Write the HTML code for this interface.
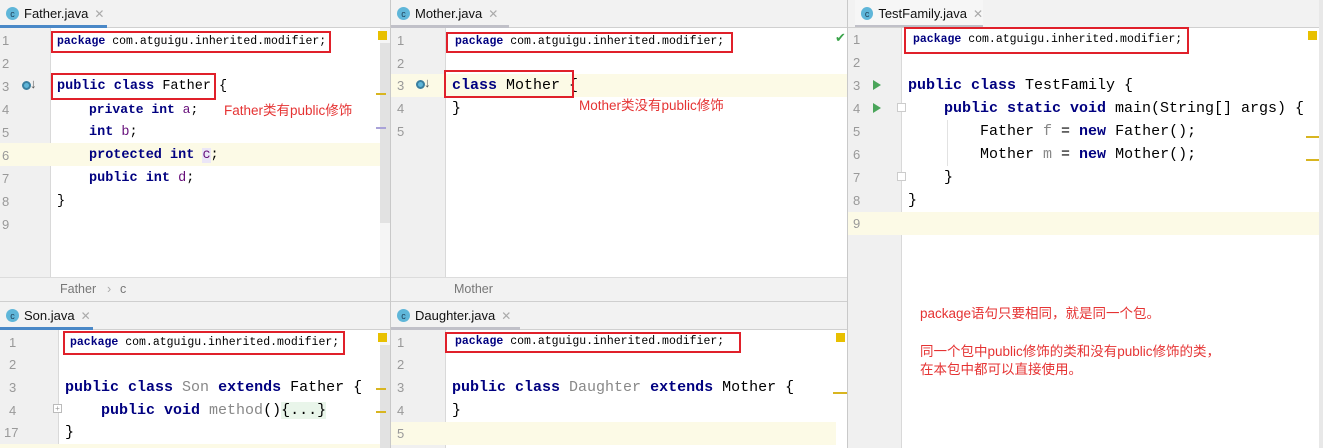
<!DOCTYPE html>
<html style="overflow:hidden;height:448px"><head><meta charset="utf-8"><style>
*{margin:0;padding:0;box-sizing:border-box}
body{width:1323px;height:448px;position:relative;overflow:hidden;background:#fff;font-family:"Liberation Sans","Noto Sans CJK SC",sans-serif}
.a{position:absolute}
.tabbar{background:#f2f2f2;border-bottom:1px solid #d0d0d0}
.tab{position:absolute;top:0;height:100%;background:#f2f2f2;font-size:13px;color:#111;display:flex;align-items:center;padding-left:6px}
.ic{width:13px;height:13px;border-radius:50%;background:#5fb6d9;color:#1e3d55;font-size:9px;display:inline-flex;align-items:center;justify-content:center;margin-right:5px;font-family:"Liberation Sans",sans-serif}
.x{color:#aaa;margin-left:6px;font-size:12px}
.gut{background:#f0f0f0;border-right:1px solid #d9d9d9}
.ln{position:absolute;font-family:"Liberation Sans",sans-serif;font-size:13px;color:#999;height:23px;line-height:23px}
.c{position:absolute;font-family:"Liberation Mono",monospace;white-space:pre;height:23px;line-height:23px;color:#000}
.p{font-size:11.5px}
.k{color:#000080;font-weight:bold}
.g{color:#888}
.v{color:#660e7a}
.hl{position:absolute;background:#fcfae6;height:23px}
.box{position:absolute;border:2px solid #e0202a}
.red{position:absolute;color:#e53333;font-size:13.5px;white-space:nowrap}
.crumb{background:#f2f2f2;border-top:1px solid #dcdcdc;border-bottom:1px solid #cfcfcf;font-size:12.5px;color:#777}
.mk{position:absolute;width:9px;height:9px;background:#e8c000}
.st{position:absolute;height:2px;background:#d8b520;width:10px}
</style></head><body>

<div class="a" style="left:390px;top:0;width:1px;height:448px;background:#c9c9c9"></div>
<div class="a" style="left:847px;top:0;width:1px;height:448px;background:#c9c9c9"></div>

<!-- LEFT TOP -->
<div class="a tabbar" style="left:0;top:0;width:390px;height:28px"></div>
<div class="tab" style="left:0;width:107px;height:27px">
<span class="ic">c</span>Father.java<span class="x">✕</span></div>
<div class="a" style="left:0;top:25px;width:107px;height:3px;background:#4a88c7"></div>
<div class="a gut" style="left:0;top:28px;width:51px;height:249px"></div>
<div class="hl" style="left:0;top:143px;width:380px"></div>
<div class="a" style="left:380px;top:28px;width:10px;height:249px;background:#f5f5f5"></div>
<div class="a" style="left:380px;top:43px;width:10px;height:180px;background:#e2e2e2"></div>
<div class="mk" style="left:378px;top:31px"></div>
<div class="st" style="left:376px;top:93px"></div>
<div class="st" style="left:376px;top:127px;background:#a9a2d8"></div>
<div class="ln" style="left:2px;top:29px">1</div>
<div class="ln" style="left:2px;top:52px">2</div>
<div class="ln" style="left:2px;top:75px">3</div>
<div class="ln" style="left:2px;top:98px">4</div>
<div class="ln" style="left:2px;top:121px">5</div>
<div class="ln" style="left:2px;top:144px">6</div>
<div class="ln" style="left:2px;top:167px">7</div>
<div class="ln" style="left:2px;top:190px">8</div>
<div class="ln" style="left:2px;top:213px">9</div>
<div class="a" style="left:22px;top:81px;width:9px;height:9px;border-radius:50%;background:#5fb6d9;border:2px solid #3a7fa0"></div>
<div class="a" style="left:30px;top:76px;font-size:13px;color:#555">↓</div>
<div class="c p" style="left:57px;top:30px"><span class="k">package</span> com.atguigu.inherited.modifier;</div>
<div class="c" style="left:57px;top:75px;font-size:13.5px"><span class="k">public class</span> Father {</div>
<div class="c" style="left:89px;top:98px;font-size:13px"><span class="k">private int</span> <span class="v">a</span>;</div>
<div class="c" style="left:89px;top:121px;font-size:13.5px"><span class="k">int</span> <span class="v">b</span>;</div>
<div class="c" style="left:89px;top:144px;font-size:13.5px"><span class="k">protected int</span> <span class="v" style="background:#ebe6f7">c</span>;</div>
<div class="c" style="left:89px;top:167px;font-size:13.5px"><span class="k">public int</span> <span class="v">d</span>;</div>
<div class="c" style="left:57px;top:190px;font-size:13.5px">}</div>
<div class="box" style="left:51px;top:31px;width:280px;height:22px"></div>
<div class="box" style="left:51px;top:73px;width:165px;height:27px"></div>
<div class="red" style="left:224px;top:99px">Father类有public修饰</div>
<div class="a crumb" style="left:0;top:277px;width:390px;height:25px"><span class="a" style="left:60px;top:4px">Father</span><span class="a" style="left:107px;top:4px;color:#aaa">›</span><span class="a" style="left:120px;top:4px">c</span></div>

<!-- LEFT BOTTOM -->
<div class="a tabbar" style="left:0;top:302px;width:390px;height:28px"></div>
<div class="tab" style="left:0;top:302px;width:93px;height:27px">
<span class="ic">c</span>Son.java<span class="x">✕</span></div>
<div class="a" style="left:0;top:327px;width:93px;height:3px;background:#4a88c7"></div>
<div class="a gut" style="left:0;top:330px;width:59px;height:118px"></div>
<div class="hl" style="left:0;top:444px;width:380px;height:4px"></div>
<div class="a" style="left:380px;top:330px;width:10px;height:118px;background:#f5f5f5"></div>
<div class="a" style="left:380px;top:345px;width:10px;height:103px;background:#e2e2e2"></div>
<div class="mk" style="left:378px;top:333px"></div>
<div class="st" style="left:376px;top:388px"></div>
<div class="st" style="left:376px;top:411px"></div>
<div class="ln" style="left:9px;top:331px">1</div>
<div class="ln" style="left:9px;top:353px">2</div>
<div class="ln" style="left:9px;top:376px">3</div>
<div class="ln" style="left:9px;top:399px">4</div>
<div class="ln" style="left:4px;top:421px">17</div>
<div class="a" style="left:53px;top:404px;width:9px;height:9px;border:1px solid #bbb;background:#fff;font-size:8px;line-height:7px;text-align:center;color:#999">+</div>
<div class="c p" style="left:70px;top:331px"><span class="k">package</span> com.atguigu.inherited.modifier;</div>
<div class="c" style="left:65px;top:376px;font-size:15px"><span class="k">public class</span> <span class="g">Son</span> <span class="k">extends</span> Father {</div>
<div class="c" style="left:101px;top:399px;font-size:15px"><span class="k">public void</span> <span class="g">method</span>()<span style="background:#e9f5ea">{...}</span></div>
<div class="c" style="left:65px;top:421px;font-size:15px">}</div>
<div class="box" style="left:63px;top:331px;width:282px;height:24px"></div>

<!-- MIDDLE TOP -->
<div class="a tabbar" style="left:391px;top:0;width:456px;height:28px"></div>
<div class="tab" style="left:391px;width:118px;height:27px">
<span class="ic">c</span>Mother.java<span class="x">✕</span></div>
<div class="a" style="left:391px;top:25px;width:118px;height:3px;background:#c0c0c8"></div>
<div class="a gut" style="left:391px;top:28px;width:55px;height:249px"></div>
<div class="hl" style="left:391px;top:74px;width:456px"></div>
<div class="a" style="left:835px;top:30px;color:#3aa34a;font-size:13px">✔</div>
<div class="ln" style="left:397px;top:29px">1</div>
<div class="ln" style="left:397px;top:52px">2</div>
<div class="ln" style="left:397px;top:74px">3</div>
<div class="ln" style="left:397px;top:97px">4</div>
<div class="ln" style="left:397px;top:120px">5</div>
<div class="a" style="left:416px;top:80px;width:9px;height:9px;border-radius:50%;background:#5fb6d9;border:2px solid #3a7fa0"></div>
<div class="a" style="left:424px;top:75px;font-size:13px;color:#555">↓</div>
<div class="c p" style="left:455px;top:30px"><span class="k">package</span> com.atguigu.inherited.modifier;</div>
<div class="c" style="left:452px;top:74px;font-size:15px"><span class="k">class</span> Mother {</div>
<div class="c" style="left:452px;top:97px;font-size:15px">}</div>
<div class="box" style="left:446px;top:32px;width:287px;height:21px"></div>
<div class="box" style="left:444px;top:70px;width:130px;height:28px"></div>
<div class="red" style="left:579px;top:94px">Mother类没有public修饰</div>
<div class="a crumb" style="left:391px;top:277px;width:456px;height:25px"><span class="a" style="left:63px;top:4px">Mother</span></div>

<!-- MIDDLE BOTTOM -->
<div class="a tabbar" style="left:391px;top:302px;width:456px;height:28px"></div>
<div class="tab" style="left:391px;top:302px;width:129px;height:27px">
<span class="ic">c</span>Daughter.java<span class="x">✕</span></div>
<div class="a" style="left:391px;top:327px;width:129px;height:3px;background:#c0c0c8"></div>
<div class="a gut" style="left:391px;top:330px;width:55px;height:118px"></div>
<div class="hl" style="left:391px;top:422px;width:445px"></div>
<div class="mk" style="left:836px;top:333px"></div>
<div class="st" style="left:833px;top:392px;width:14px"></div>
<div class="ln" style="left:397px;top:331px">1</div>
<div class="ln" style="left:397px;top:353px">2</div>
<div class="ln" style="left:397px;top:376px">3</div>
<div class="ln" style="left:397px;top:399px">4</div>
<div class="ln" style="left:397px;top:422px">5</div>
<div class="c p" style="left:455px;top:330px"><span class="k">package</span> com.atguigu.inherited.modifier;</div>
<div class="c" style="left:452px;top:376px;font-size:15px"><span class="k">public class</span> <span class="g">Daughter</span> <span class="k">extends</span> Mother {</div>
<div class="c" style="left:452px;top:399px;font-size:15px">}</div>
<div class="box" style="left:445px;top:332px;width:296px;height:21px"></div>

<!-- RIGHT -->
<div class="a tabbar" style="left:848px;top:0;width:475px;height:28px"></div>
<div class="tab" style="left:855px;width:128px;height:27px;background:#f6f6f6">
<span class="ic">c</span>TestFamily.java<span class="x">✕</span></div>
<div class="a" style="left:855px;top:25px;width:128px;height:2px;background:#c0c0c8"></div>
<div class="a gut" style="left:848px;top:28px;width:54px;height:420px"></div>
<div class="hl" style="left:848px;top:212px;width:475px"></div>
<div class="a" style="left:1319px;top:0;width:4px;height:448px;background:#e8e8e8"></div>
<div class="mk" style="left:1308px;top:31px"></div>
<div class="st" style="left:1306px;top:136px;width:13px"></div>
<div class="st" style="left:1306px;top:159px;width:13px"></div>
<div class="ln" style="left:853px;top:28px">1</div>
<div class="ln" style="left:853px;top:51px">2</div>
<div class="ln" style="left:853px;top:74px">3</div>
<div class="ln" style="left:853px;top:97px">4</div>
<div class="ln" style="left:853px;top:120px">5</div>
<div class="ln" style="left:853px;top:143px">6</div>
<div class="ln" style="left:853px;top:166px">7</div>
<div class="ln" style="left:853px;top:189px">8</div>
<div class="ln" style="left:853px;top:212px">9</div>
<svg class="a" style="left:872px;top:79px" width="10" height="12"><path d="M1 1L9 6L1 11Z" fill="#4aa55a"/></svg>
<svg class="a" style="left:872px;top:102px" width="10" height="12"><path d="M1 1L9 6L1 11Z" fill="#4aa55a"/></svg>
<div class="a" style="left:897px;top:103px;width:9px;height:9px;border:1px solid #ccc;background:#fff"></div>
<div class="a" style="left:897px;top:172px;width:9px;height:9px;border:1px solid #ccc;background:#fff"></div>
<div class="a" style="left:947px;top:120px;width:1px;height:46px;background:#e2e2e2"></div>
<div class="c p" style="left:913px;top:28px"><span class="k">package</span> com.atguigu.inherited.modifier;</div>
<div class="c" style="left:908px;top:74px;font-size:15px"><span class="k">public class</span> TestFamily {</div>
<div class="c" style="left:944px;top:97px;font-size:15px"><span class="k">public static void</span> main(String[] args) {</div>
<div class="c" style="left:980px;top:120px;font-size:15px">Father <span class="g">f</span> = <span class="k">new</span> Father();</div>
<div class="c" style="left:980px;top:143px;font-size:15px">Mother <span class="g">m</span> = <span class="k">new</span> Mother();</div>
<div class="c" style="left:944px;top:166px;font-size:15px">}</div>
<div class="c" style="left:908px;top:189px;font-size:15px">}</div>
<div class="box" style="left:904px;top:27px;width:285px;height:27px"></div>
<div class="red" style="left:920px;top:302px">package语句只要相同，就是同一个包。</div>
<div class="red" style="left:920px;top:340px">同一个包中public修饰的类和没有public修饰的类，</div>
<div class="red" style="left:920px;top:358px">在本包中都可以直接使用。</div>

</body></html>
